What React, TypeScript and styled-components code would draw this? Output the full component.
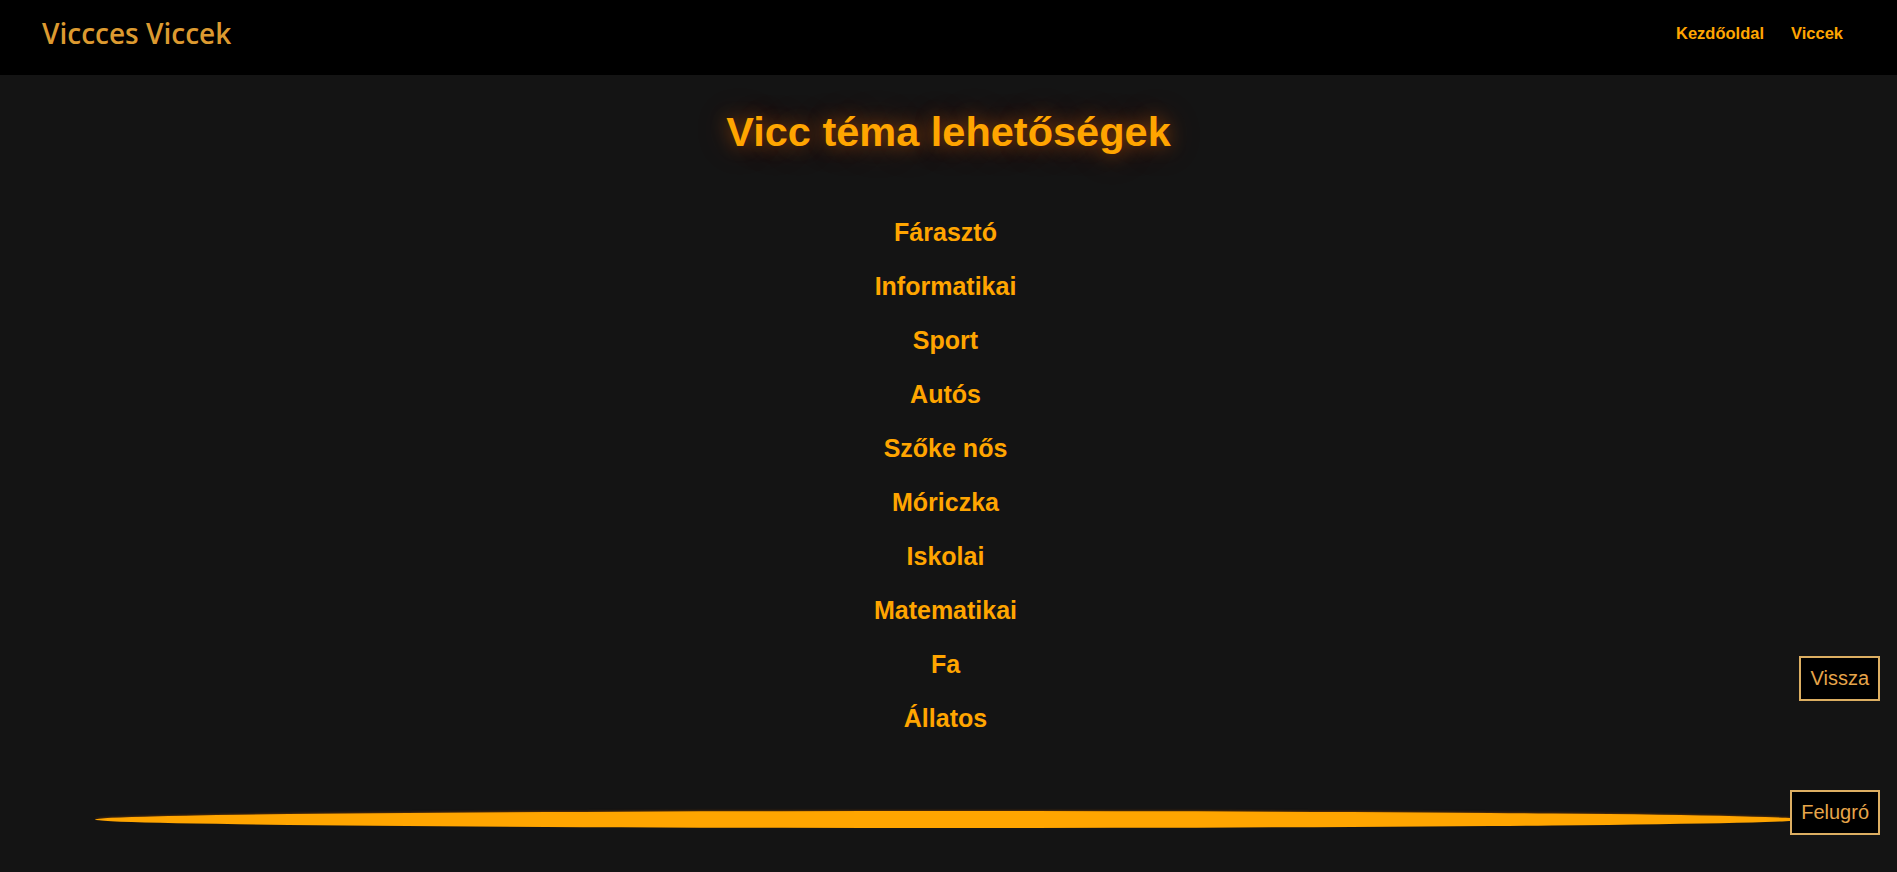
import React from 'react';
import styled, { createGlobalStyle } from 'styled-components';

const topics: string[] = [
  'Fárasztó',
  'Informatikai',
  'Sport',
  'Autós',
  'Szőke nős',
  'Móriczka',
  'Iskolai',
  'Matematikai',
  'Fa',
  'Állatos',
];

type FloatProps = {
  bottom: number;
};

const GlobalStyle = createGlobalStyle`
  html, body {
    margin: 0;
    padding: 0;
    background-color: #141414;
    font-family: 'Liberation Sans', Arial, sans-serif;
  }
`;

const Header = styled.header`
  height: 75px;
  box-sizing: border-box;
  background-color: #000;
  display: flex;
  justify-content: space-between;
  align-items: center;
  padding: 0 54px 9px 42px;
`;

const Brand = styled.div`
  font-family: 'Open Sans', 'Noto Sans', sans-serif;
  font-weight: 600;
  font-size: 28px;
  color: #dc9a30;
`;

const Nav = styled.nav`
  display: flex;
  gap: 27px;
`;

const NavLink = styled.a`
  font-size: 16.5px;
  font-weight: bold;
  color: #ffa500;
  text-decoration: none;
  cursor: pointer;
`;

const Main = styled.main`
  display: flex;
  flex-direction: column;
  align-items: center;
`;

const Title = styled.h1`
  margin: 33px 0 49px;
  font-size: 41.5px;
  line-height: 48px;
  font-weight: bold;
  color: #ffa500;
  text-shadow: 0 0 18px rgba(255, 110, 0, 0.45), 0 0 36px rgba(255, 90, 0, 0.25);
`;

const TopicList = styled.ul`
  list-style: none;
  margin: 0;
  padding: 0 6px 0 0;
  text-align: center;
`;

const Topic = styled.li`
  font-size: 25px;
  line-height: 54px;
  font-weight: bold;
  color: #ffa500;
  cursor: pointer;
`;

const Bar = styled.div`
  width: 90%;
  height: 17px;
  margin: 66px auto 0;
  border-radius: 50%;
  background-color: #ffa500;
  box-shadow: 0 -1px 2px rgba(120, 60, 0, 0.6);
`;

const FloatButton = styled.button<FloatProps>`
  position: fixed;
  right: 17px;
  bottom: ${props => props.bottom}px;
  padding: 9px 9px;
  font-family: 'Liberation Sans', Arial, sans-serif;
  font-size: 20px;
  line-height: 23px;
  color: #e6a54a;
  background-color: #000;
  border: 2px solid #dcae62;
  cursor: pointer;
`;

export default function App() {
  return (
    <>
      <GlobalStyle />
      <Header>
        <Brand>Viccces Viccek</Brand>
        <Nav>
          <NavLink>Kezdőoldal</NavLink>
          <NavLink>Viccek</NavLink>
        </Nav>
      </Header>
      <Main>
        <Title>Vicc téma lehetőségek</Title>
        <TopicList>
          {topics.map(t => (
            <Topic key={t}>{t}</Topic>
          ))}
        </TopicList>
      </Main>
      <Bar />
      <FloatButton bottom={171}>Vissza</FloatButton>
      <FloatButton bottom={37}>Felugró</FloatButton>
    </>
  );
}
